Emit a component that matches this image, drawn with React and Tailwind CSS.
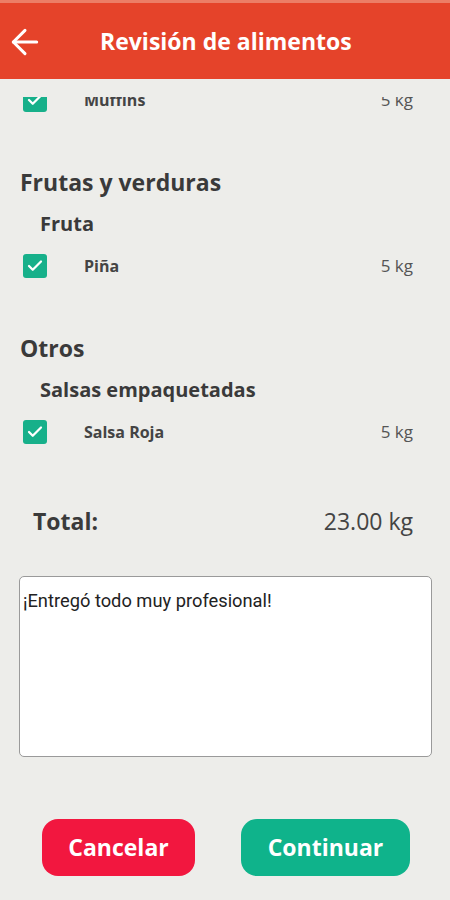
import { ArrowLeft, Check } from "lucide-react";

const sections = [
  {
    title: "Frutas y verduras",
    groups: [{ name: "Fruta", items: [{ name: "Piña", qty: "5 kg" }] }],
  },
  {
    title: "Otros",
    groups: [{ name: "Salsas empaquetadas", items: [{ name: "Salsa Roja", qty: "5 kg" }] }],
  },
];

const ItemRow = ({ name, qty }) => (
  <div className="h-[42px] flex items-center pl-[23px] pr-[37px]">
    <div className="w-6 h-6 rounded-[3px] bg-[#17b08a] flex items-center justify-center shrink-0">
      <Check size={18} strokeWidth={3} className="text-white" />
    </div>
    <span className="ml-[37px] flex-1 text-[16px] font-bold text-[#444]">{name}</span>
    <span className="text-[17px] text-[#555]">{qty}</span>
  </div>
);

export default function App() {
  return (
    <div className="w-[450px] h-[900px] bg-[#ededea] flex flex-col overflow-hidden font-['Open_Sans',sans-serif]">
      <div className="h-[3px] bg-[#ec7d66]" />
      <div className="h-[76px] bg-[#e5432a] flex items-center pl-[5px]">
        <ArrowLeft size={40} strokeWidth={1.8} className="text-white mt-[1px]" />
        <h1 className="ml-[55px] text-[23px] font-bold text-white">Revisión de alimentos</h1>
      </div>

      <div className="h-[18px]" />

      <div className="flex-1 overflow-hidden">
        <div className="-mt-[18px]">
          <ItemRow name="Muffins" qty="5 kg" />

          {sections.map((section) => (
            <div key={section.title} className="mt-[40px]">
              <div className="h-[42px] flex items-center pl-5 text-[23px] font-bold text-[#3a3a3a]">
                {section.title}
              </div>
              {section.groups.map((group) => (
                <div key={group.name}>
                  <div className="h-[42px] flex items-center pl-10 text-[20px] font-bold text-[#3a3a3a]">
                    {group.name}
                  </div>
                  {group.items.map((item) => (
                    <ItemRow key={item.name} {...item} />
                  ))}
                </div>
              ))}
            </div>
          ))}

          <div className="mt-[47px] h-[42px] flex items-center justify-between pl-[33px] pr-[37px]">
            <span className="text-[23px] font-bold text-[#3a3a3a]">Total:</span>
            <span className="text-[23px] text-[#444]">23.00 kg</span>
          </div>

          <div className="mt-[34px] mx-[19px] w-[413px] h-[181px] bg-white border border-[#9a9a9a] rounded-[5px] px-[3px] pt-[12px] text-[18.3px] leading-[24px] text-[#222] font-['Roboto',sans-serif]">
            ¡Entregó todo muy profesional!
          </div>

          <div className="mt-[62px] flex pl-[42px] gap-[46px]">
            <button className="w-[153px] h-[57px] rounded-[16px] bg-[#f2173f] text-white text-[23px] font-bold">
              Cancelar
            </button>
            <button className="w-[169px] h-[57px] rounded-[16px] bg-[#0fb38b] text-white text-[23px] font-bold">
              Continuar
            </button>
          </div>
        </div>
      </div>
    </div>
  );
}
